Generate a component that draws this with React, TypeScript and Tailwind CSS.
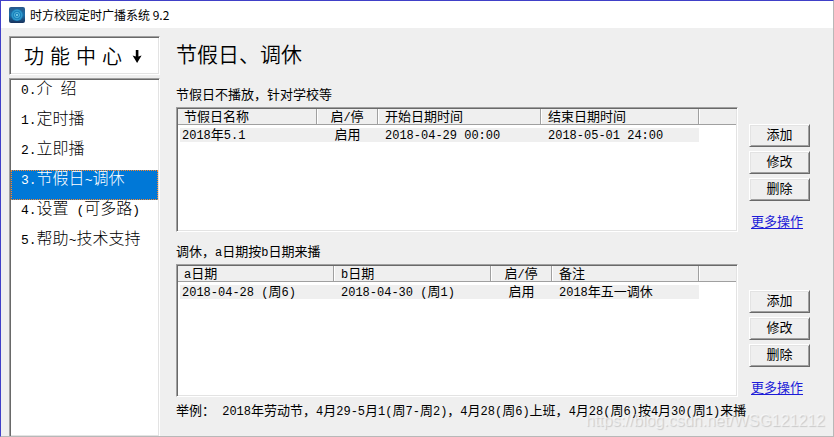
import { useState } from "react";
import clsx from "clsx";

const MENU = ["0.介 绍", "1.定时播", "2.立即播", "3.节假日~调休", "4.设置 (可多路)", "5.帮助~技术支持"];

const SUNKEN =
  "border border-t-[#a0a0a0] border-l-[#a0a0a0] border-r-white border-b-white shadow-[inset_1px_1px_0_#696969,inset_-1px_-1px_0_#e3e3e3] bg-white p-px";

interface Column {
  title: string;
  width: string;
  center?: boolean;
}

const HOLIDAY_COLUMNS: Column[] = [
  { title: "节假日名称", width: "w-[139px]" },
  { title: "启/停", width: "w-[61px]", center: true },
  { title: "开始日期时间", width: "w-[163px]" },
  { title: "结束日期时间", width: "w-[158px]" },
];

const SHIFT_COLUMNS: Column[] = [
  { title: "a日期", width: "w-[156px]" },
  { title: "b日期", width: "w-[157px]" },
  { title: "启/停", width: "w-[61px]", center: true },
  { title: "备注", width: "w-[147px]" },
];

// Latin runs are set in a half-width mono face next to the full-width characters
function Mixed({ text, large = false }: { text: string; large?: boolean }) {
  const parts = text.split(/([\x20-\x7e]+)/).filter(Boolean);
  return (
    <span className="whitespace-pre">
      {parts.map((part, i) =>
        /^[\x20-\x7e]/.test(part) ? (
          <span
            key={i}
            className={clsx("font-['Liberation_Mono',monospace] leading-none", large ? "text-[13px]" : "text-[12px]")}
          >
            {part}
          </span>
        ) : (
          part
        )
      )}
    </span>
  );
}

function AppLogo() {
  return (
    <svg width="16" height="16" viewBox="0 0 16 16" aria-hidden="true">
      <defs>
        <linearGradient id="logo" x1="0" y1="0" x2="0" y2="1">
          <stop offset="0" stopColor="#28588a" />
          <stop offset="0.5" stopColor="#1c6ea6" />
          <stop offset="1" stopColor="#18325c" />
        </linearGradient>
      </defs>
      <rect width="16" height="16" rx="2" fill="url(#logo)" />
      <circle cx="8" cy="8" r="6" fill="#1a82bb" />
      <circle cx="8" cy="8" r="4.8" fill="none" stroke="#3fa5d4" strokeWidth="0.8" />
      <circle cx="8" cy="8" r="2.6" fill="none" stroke="#5cbce2" strokeWidth="0.8" />
      <circle cx="8" cy="8" r="1" fill="#8ed8f2" />
    </svg>
  );
}

function ListTable({ label, columns, row, height }: { label: string; columns: Column[]; row: string[]; height: string }) {
  return (
    <div className={clsx("min-w-0 flex-1", SUNKEN, height)}>
      <table aria-label={label} className="w-full table-fixed border-separate border-spacing-0">
        <thead>
          <tr className="bg-[#efefef] leading-[14px]">
            {columns.map((col, i) => (
              <th
                key={col.title}
                className={clsx(
                  "h-4 border-r border-b border-[#a0a0a0] p-0 align-top font-normal",
                  col.width,
                  i > 0 && "shadow-[inset_1px_0_0_#ffffff]",
                  col.center ? "text-center" : i === 0 ? "pl-[6px] text-left" : "pl-[7px] text-left"
                )}
              >
                <Mixed text={col.title} />
              </th>
            ))}
            <td className="border-b border-[#a0a0a0] shadow-[inset_1px_0_0_#ffffff]" />
          </tr>
        </thead>
        <tbody>
          <tr className="leading-[12px]">
            {row.map((cell, i) => (
              <td
                key={i}
                className={clsx(
                  "h-[17px] border-t-[3px] border-white bg-[#efefef] p-0 align-top",
                  columns[i].center ? "text-center" : i === 0 ? "border-l-2 pl-[2px]" : "pl-[7px]"
                )}
              >
                <Mixed text={cell} />
              </td>
            ))}
            <td />
          </tr>
        </tbody>
      </table>
    </div>
  );
}

function Actions({ className }: { className: string }) {
  return (
    <div className={clsx("flex w-[61px] shrink-0 flex-col gap-[4px]", className)}>
      {["添加", "修改", "删除"].map((name) => (
        <button
          key={name}
          type="button"
          className="h-[23px] border border-t-white border-l-white border-r-[#696969] border-b-[#696969] bg-[#efefef] pb-[3px] leading-[18px] shadow-[inset_1px_1px_0_#e3e3e3,inset_-1px_-1px_0_#a0a0a0]"
        >
          {name}
        </button>
      ))}
      <a href="#more" className="mt-[7px] ml-[2px] whitespace-nowrap leading-[18px] text-[#1c1cd8] underline underline-offset-2">
        更多操作
      </a>
    </div>
  );
}

export default function App() {
  const [selected, setSelected] = useState(3);

  return (
    <div className="relative flex h-screen flex-col overflow-hidden border border-t-[#4040c8] border-l-[#4040c8] border-r-[#b8b8b8] border-b-[#b8b8b8] bg-[#efefef] font-['Noto_Sans_CJK_SC',sans-serif] text-[13px] text-black">
      <header className="flex h-[27px] shrink-0 items-center gap-[5px] bg-white px-2 text-[12px]">
        <AppLogo />
        <span className="leading-[16px]">时方校园定时广播系统 9.2</span>
      </header>

      <div className="flex min-h-0 flex-1 gap-4 pr-[23px] pl-2">
        <aside className="flex w-[151px] shrink-0 flex-col gap-[3px] pt-2">
          <div className={clsx("flex h-[39px] shrink-0 items-center pl-[14px] text-[20px]", SUNKEN)}>
            <span className="flex gap-[6px] font-[350]">
              <span>功</span>
              <span>能</span>
              <span>中</span>
              <span>心</span>
            </span>
            <svg className="ml-[10px]" width="10" height="16" viewBox="0 0 10 16" aria-hidden="true">
              <path d="M3.8 2h2.6v6.6L9.6 7.4 5.1 15 0.6 7.4 3.8 8.6z" fill="#000" />
            </svg>
          </div>
          <nav className={clsx("flex flex-1 flex-col border-b-0 text-[16px] font-light", SUNKEN)}>
            {MENU.map((item, i) => (
              <button
                key={item}
                type="button"
                onClick={() => setSelected(i)}
                className={clsx(
                  "flex h-[30px] shrink-0 items-start pl-[10px] text-left leading-[14px]",
                  selected === i && "bg-[#0078d7] text-white outline-1 -outline-offset-1 outline-dotted outline-[#ff8728]"
                )}
              >
                <Mixed text={item} large />
              </button>
            ))}
          </nav>
        </aside>

        <main className="min-w-0 flex-1 pt-[10px]">
          <h1 className="text-[21px] leading-[30px] font-[350]">节假日、调休</h1>

          <p className="mt-[17px] mb-1 leading-[18px]">节假日不播放，针对学校等</p>
          <div className="flex gap-[11px]">
            <ListTable
              label="节假日"
              columns={HOLIDAY_COLUMNS}
              row={["2018年5.1", "启用", "2018-04-29 00:00", "2018-05-01 24:00"]}
              height="h-[125px]"
            />
            <Actions className="pt-[17px]" />
          </div>

          <p className="mt-[10px] mb-1 leading-[18px]">
            <Mixed text="调休，a日期按b日期来播" />
          </p>
          <div className="flex gap-[11px]">
            <ListTable
              label="调休"
              columns={SHIFT_COLUMNS}
              row={["2018-04-28 (周6)", "2018-04-30 (周1)", "启用", "2018年五一调休"]}
              height="h-[133px]"
            />
            <Actions className="pt-[26px]" />
          </div>

          <p className="mt-1 leading-[18px]">
            <Mixed text="举例： 2018年劳动节，4月29-5月1(周7-周2)，4月28(周6)上班，4月28(周6)按4月30(周1)来播" />
          </p>
        </main>
      </div>

      <span className="pointer-events-none absolute right-2 bottom-[5px] font-['Liberation_Sans',sans-serif] text-[16px] leading-[20px] text-white/50 [text-shadow:1px_1px_1px_rgba(0,0,0,0.16)]">
        https://blog.csdn.net/WSG121212
      </span>
    </div>
  );
}
